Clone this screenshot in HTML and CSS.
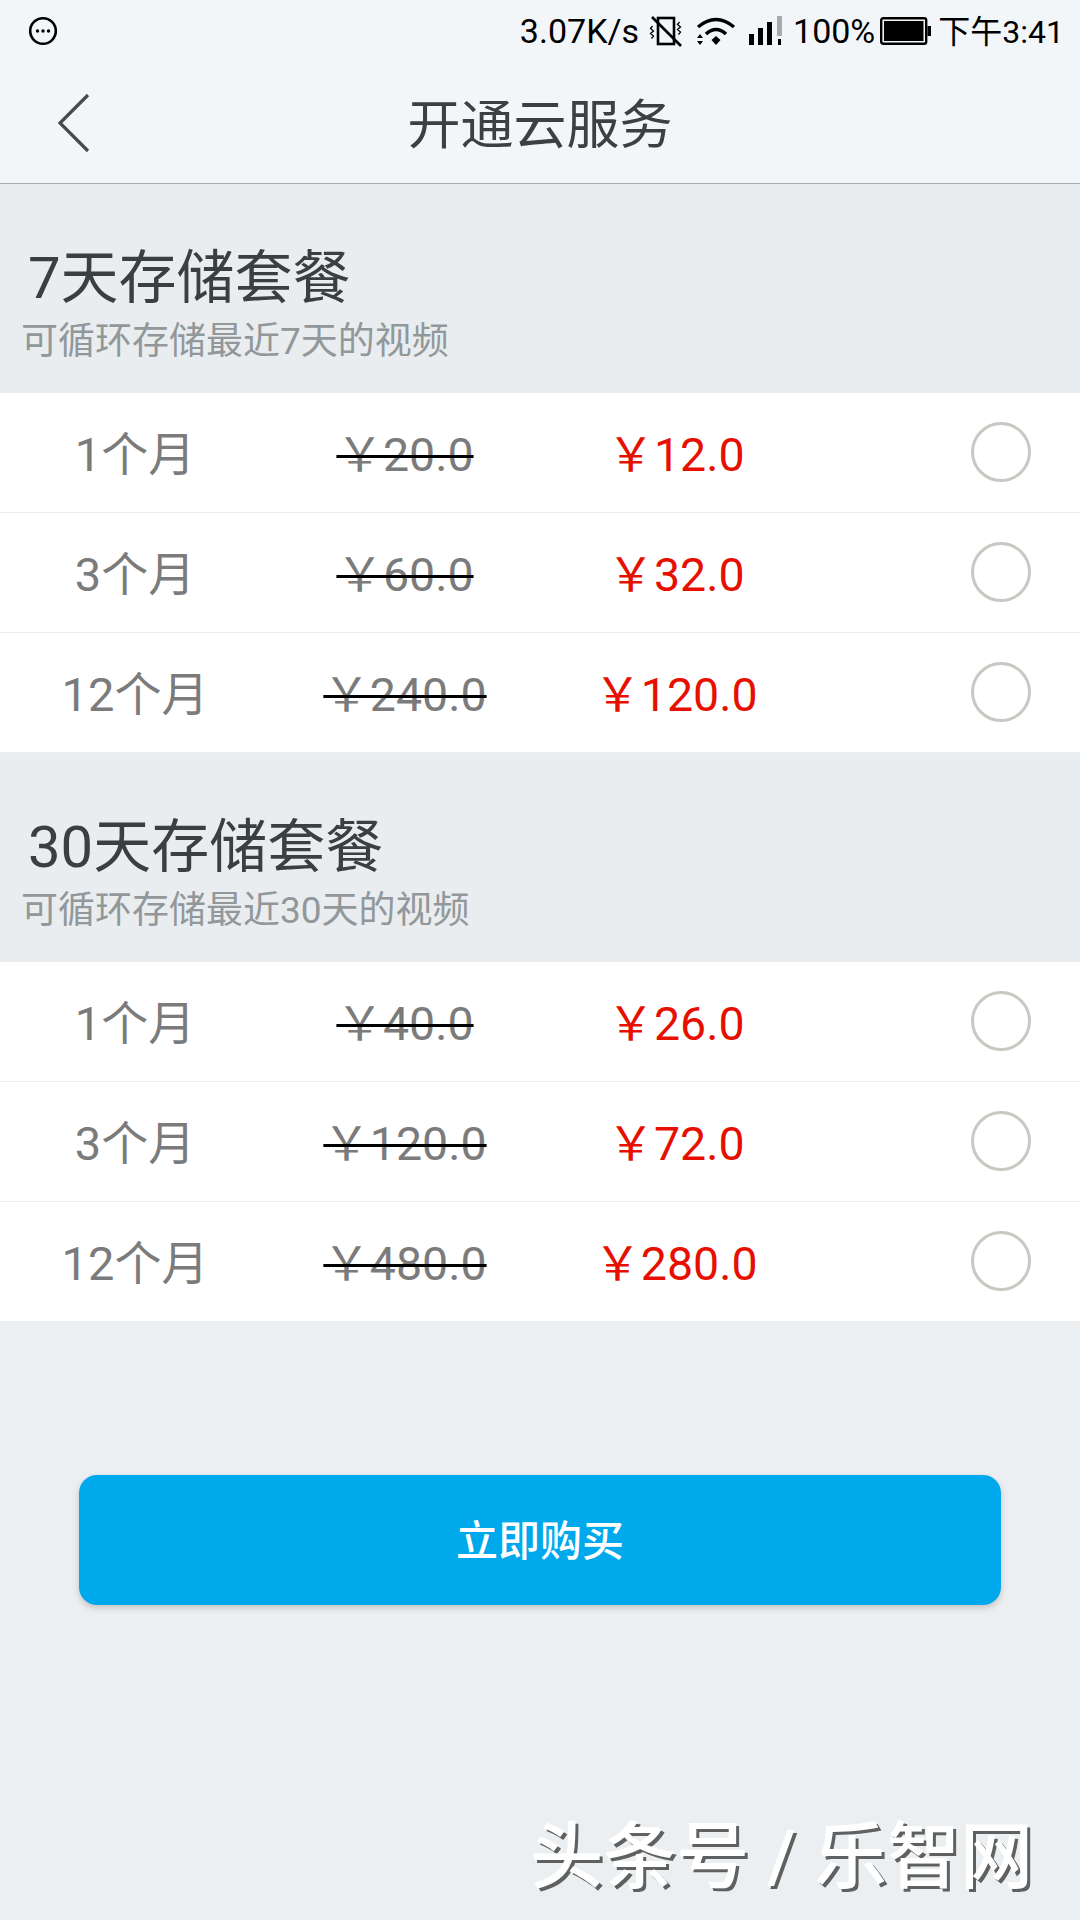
FILE: index.html
```html
<!DOCTYPE html>
<html lang="zh-CN">
<head>
  <meta charset="UTF-8">
  <meta name="viewport" content="width=device-width, initial-scale=1.0">
  <title>开通云服务</title>
  <link rel="stylesheet" href="styles.css">
</head>
<body>
  <div class="app">
    <header class="top">
      <div class="status">
        <svg class="msg-icon" width="30" height="30" viewBox="0 0 30 30">
          <circle cx="15" cy="15" r="12.8" fill="none" stroke="#000" stroke-width="2.6"/>
          <circle cx="9.5" cy="15" r="1.7"/><circle cx="15" cy="15" r="1.7"/><circle cx="20.5" cy="15" r="1.7"/>
        </svg>
        <span class="speed">3.07K/s</span>
        <svg class="vib-icon" width="34" height="32" viewBox="0 0 34 32">
          <rect x="9" y="3" width="16" height="26" fill="none" stroke="#000" stroke-width="2.6"/>
          <path d="M3 2 L32 31" stroke="#000" stroke-width="2.6"/>
          <path d="M3.5 11 l-2 2.5 l3 2.5 l-3 2.5 l3 2.5 l-2 2.5 M30.5 7 l-2 2.5 l3 2.5 l-3 2.5 l3 2.5 l-2 2.5" fill="none" stroke="#000" stroke-width="1.3"/>
        </svg>
        <svg class="wifi-icon" width="40" height="30" viewBox="0 0 40 30">
          <path d="M2 11 Q20 -4 38 11" fill="none" stroke="#000" stroke-width="3.4"/>
          <path d="M10 18 Q20 9 30 18" fill="none" stroke="#000" stroke-width="3.4"/>
          <path d="M15.5 24 L20 20 L24.5 24 L20 29 Z"/>
          <path d="M4 18 L7 22 H1 Z M4 29 L1 25 H7 Z"/>
        </svg>
        <svg class="signal-icon" width="34" height="30" viewBox="0 0 34 30">
          <rect x="0" y="18" width="5" height="11"/>
          <rect x="9" y="12" width="5" height="17"/>
          <rect x="18" y="6" width="5" height="23"/>
          <rect x="28" y="0" width="5" height="20" fill="#a9a9a9"/>
          <rect x="29" y="23" width="3" height="6"/>
        </svg>
        <span class="pct">100%</span>
        <svg class="batt-icon" width="51" height="28" viewBox="0 0 51 28">
          <rect x="1.2" y="1.2" width="45" height="25.6" rx="2" fill="none" stroke="#000" stroke-width="2.4"/>
          <rect x="4" y="4" width="39.5" height="20"/>
          <rect x="47.5" y="9" width="3.5" height="10"/>
        </svg>
        <span class="clock">下午3:41</span>
      </div>
      <div class="nav">
        <svg class="back" width="34" height="60" viewBox="0 0 34 60">
          <path d="M31 2 L3 30 L31 58" fill="none" stroke="#454a4c" stroke-width="3.2"/>
        </svg>
        <h1>开通云服务</h1>
      </div>
    </header>

    <section>
      <div class="plan-head">
        <h2>7天存储套餐</h2>
        <p>可循环存储最近7天的视频</p>
      </div>
      <div class="row"><span class="term">1个月</span><span class="old">￥20.0</span><span class="price">￥12.0</span><span class="radio"></span></div>
      <div class="row"><span class="term">3个月</span><span class="old">￥60.0</span><span class="price">￥32.0</span><span class="radio"></span></div>
      <div class="row"><span class="term">12个月</span><span class="old">￥240.0</span><span class="price">￥120.0</span><span class="radio"></span></div>
    </section>

    <section>
      <div class="plan-head">
        <h2>30天存储套餐</h2>
        <p>可循环存储最近30天的视频</p>
      </div>
      <div class="row"><span class="term">1个月</span><span class="old">￥40.0</span><span class="price">￥26.0</span><span class="radio"></span></div>
      <div class="row"><span class="term">3个月</span><span class="old">￥120.0</span><span class="price">￥72.0</span><span class="radio"></span></div>
      <div class="row"><span class="term">12个月</span><span class="old">￥480.0</span><span class="price">￥280.0</span><span class="radio"></span></div>
    </section>

    <button class="buy">立即购买</button>

    <div class="watermark">头条号 / 乐智网</div>
  </div>
</body>
</html>
```

FILE: styles.css
```css
* {
  box-sizing: border-box;
}

body {
  margin: 0;
  background: #eceff2;
  font-family: Roboto, "Noto Sans CJK SC", sans-serif;
}

.app {
  position: relative;
  width: 1080px;
  height: 1920px;
  overflow: hidden;
}

.top {
  height: 184px;
  background: #f2f6f8;
  border-bottom: 1px solid #a9adaf;
}

.status {
  display: flex;
  align-items: center;
  height: 62px;
  padding: 0 16px 0 28px;
  font-size: 34px;
  color: #000;
}

.speed {
  margin-left: auto;
}

.vib-icon {
  margin-left: 10px;
}

.wifi-icon {
  margin-left: 13px;
}

.signal-icon {
  margin-left: 13px;
}

.pct {
  margin-left: 10px;
}

.batt-icon {
  margin-left: 5px;
}

.clock {
  margin-left: 7px;
  padding-bottom: 4px;
  font-size: 32px;
}

.nav {
  position: relative;
  display: flex;
  align-items: center;
  justify-content: center;
  height: 117px;
}

.nav h1 {
  margin: 0;
  font-size: 53px;
  font-weight: 400;
  color: #3c4042;
}

.back {
  position: absolute;
  left: 57px;
  top: 31px;
}

.plan-head {
  height: 209px;
  padding: 63px 0 0 21px;
  background: #e9edf0;
}

.plan-head h2 {
  margin: 0 0 11px 7px;
  font-size: 58px;
  line-height: 62px;
  font-weight: 400;
  color: #3a3f40;
}

.plan-head p {
  margin: 0;
  font-size: 37px;
  line-height: 44px;
  color: #92989a;
}

.row {
  display: grid;
  grid-template-columns: 266px 278px 270px 1fr;
  align-items: center;
  height: 120px;
  padding-bottom: 4px;
  background: #fff;
  border-bottom: 1px solid #eceeee;
  font-size: 47px;
  text-align: center;
}

.term {
  margin-left: 4px;
  color: #7b7b7b;
}

.old {
  color: #7b7b7b;
  font-size: 46.5px;
  text-decoration: line-through #000 3px;
}

.price {
  margin-right: 6px;
  font-size: 46.5px;
  color: #e60f00;
}

.radio {
  justify-self: end;
  width: 60px;
  height: 60px;
  margin-top: 2px;
  margin-right: 49px;
  border: 3px solid #c9c9c3;
  border-radius: 50%;
}

.buy {
  display: block;
  width: 922px;
  height: 130px;
  margin: 153px 0 0 79px;
  padding-bottom: 7px;
  border: none;
  border-radius: 18px;
  background: #00a8ec;
  box-shadow: 0 3px 6px rgba(90, 70, 60, 0.25);
  color: #fff;
  font-family: inherit;
  font-size: 42px;
  font-weight: 500;
}

.watermark {
  position: absolute;
  right: 47px;
  top: 1810px;
  font-size: 73px;
  line-height: 94px;
  font-weight: 500;
  color: #fff;
  text-shadow: 3px 3px 0 #5f6060;
}
```
